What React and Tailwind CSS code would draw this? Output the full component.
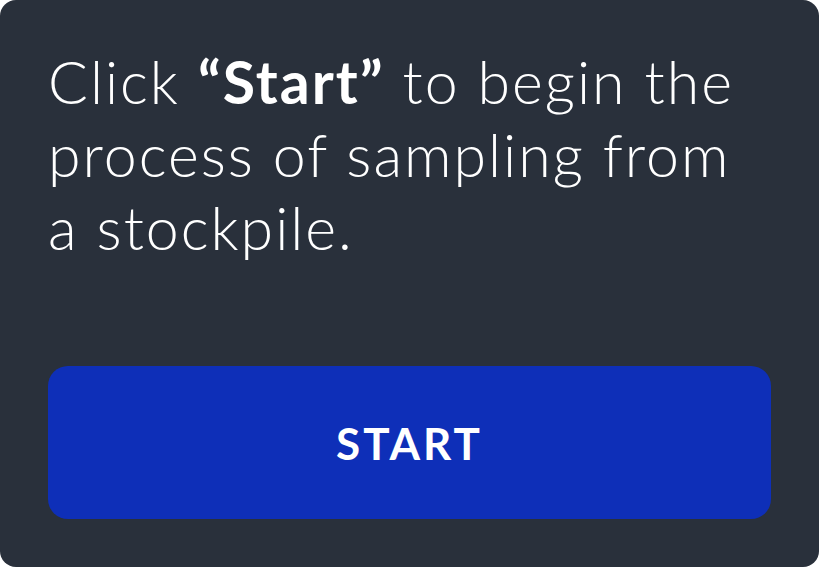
export default function App() {
  return (
    <div className="h-[567px] w-[819px] bg-white">
      <div className="flex h-full flex-col justify-between rounded-[16px] bg-[#29303b] p-12 pt-[45px] font-['Lato',sans-serif] text-white">
        <p className="text-[59px] font-light leading-[73px] tracking-[2px]">
          Click <span className="font-bold">“Start”</span> to begin the
          <br />
          process of sampling from
          <br />a stockpile.
        </p>
        <button
          type="button"
          className="h-[153px] w-full rounded-[20px] bg-[#0e2fb8] text-[44px] font-bold tracking-[3px] text-white"
        >
          START
        </button>
      </div>
    </div>
  );
}
